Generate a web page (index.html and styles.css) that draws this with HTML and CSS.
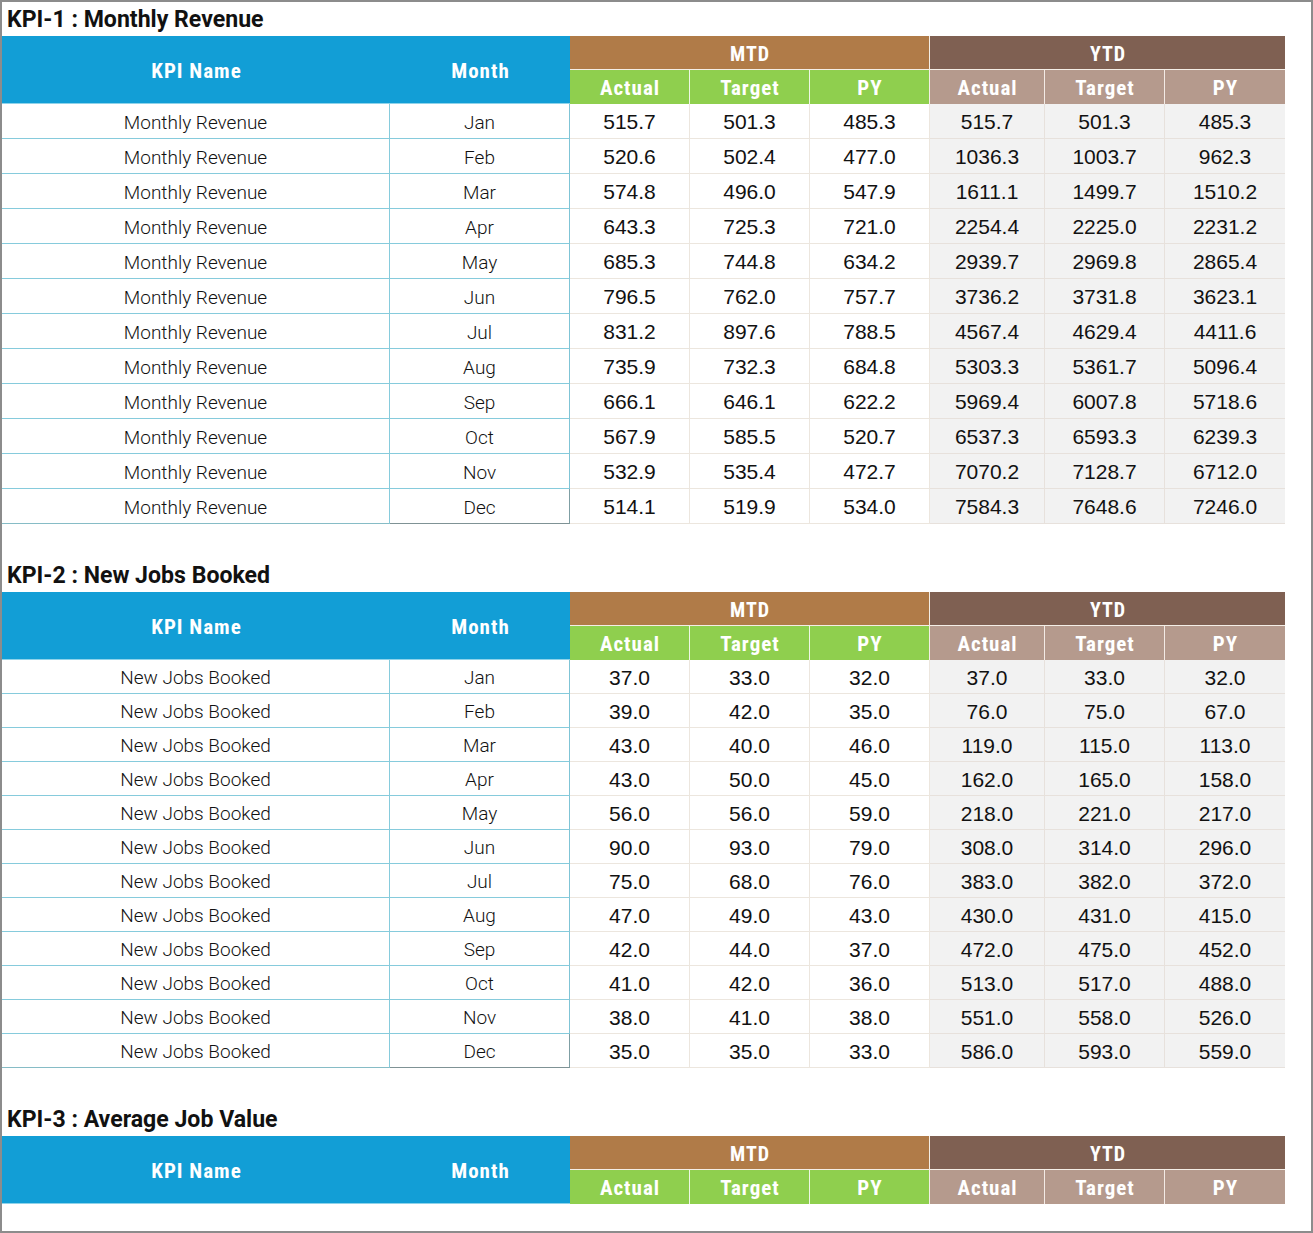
FILE: index.html
```html
<!DOCTYPE html>
<html lang="en">
<head>
<meta charset="utf-8">
<title>KPI Tables</title>
<link rel="stylesheet" href="styles.css">
</head>
<body>
<div class="sheet">

  <h2 class="kpi-title">KPI-1 : Monthly Revenue</h2>
  <table class="kpi rows35">
    <colgroup>
      <col class="c-name"><col class="c-month">
      <col class="c-num"><col class="c-num"><col class="c-num">
      <col class="c-num2"><col class="c-num"><col class="c-num">
    </colgroup>
    <thead>
      <tr class="hrow">
        <th class="h-blue" rowspan="2">KPI Name</th>
        <th class="h-blue" rowspan="2">Month</th>
        <th class="h-mtd" colspan="3">MTD</th>
        <th class="h-ytd" colspan="3">YTD</th>
      </tr>
      <tr class="hrow">
        <th class="h-green">Actual</th><th class="h-green">Target</th><th class="h-green last">PY</th>
        <th class="h-ysub">Actual</th><th class="h-ysub">Target</th><th class="h-ysub last">PY</th>
      </tr>
    </thead>
    <tbody>
      <tr><td class="nm">Monthly Revenue</td><td class="mo">Jan</td><td class="m">515.7</td><td class="m">501.3</td><td class="m">485.3</td><td class="y">515.7</td><td class="y">501.3</td><td class="y">485.3</td></tr>
      <tr><td class="nm">Monthly Revenue</td><td class="mo">Feb</td><td class="m">520.6</td><td class="m">502.4</td><td class="m">477.0</td><td class="y">1036.3</td><td class="y">1003.7</td><td class="y">962.3</td></tr>
      <tr><td class="nm">Monthly Revenue</td><td class="mo">Mar</td><td class="m">574.8</td><td class="m">496.0</td><td class="m">547.9</td><td class="y">1611.1</td><td class="y">1499.7</td><td class="y">1510.2</td></tr>
      <tr><td class="nm">Monthly Revenue</td><td class="mo">Apr</td><td class="m">643.3</td><td class="m">725.3</td><td class="m">721.0</td><td class="y">2254.4</td><td class="y">2225.0</td><td class="y">2231.2</td></tr>
      <tr><td class="nm">Monthly Revenue</td><td class="mo">May</td><td class="m">685.3</td><td class="m">744.8</td><td class="m">634.2</td><td class="y">2939.7</td><td class="y">2969.8</td><td class="y">2865.4</td></tr>
      <tr><td class="nm">Monthly Revenue</td><td class="mo">Jun</td><td class="m">796.5</td><td class="m">762.0</td><td class="m">757.7</td><td class="y">3736.2</td><td class="y">3731.8</td><td class="y">3623.1</td></tr>
      <tr><td class="nm">Monthly Revenue</td><td class="mo">Jul</td><td class="m">831.2</td><td class="m">897.6</td><td class="m">788.5</td><td class="y">4567.4</td><td class="y">4629.4</td><td class="y">4411.6</td></tr>
      <tr><td class="nm">Monthly Revenue</td><td class="mo">Aug</td><td class="m">735.9</td><td class="m">732.3</td><td class="m">684.8</td><td class="y">5303.3</td><td class="y">5361.7</td><td class="y">5096.4</td></tr>
      <tr><td class="nm">Monthly Revenue</td><td class="mo">Sep</td><td class="m">666.1</td><td class="m">646.1</td><td class="m">622.2</td><td class="y">5969.4</td><td class="y">6007.8</td><td class="y">5718.6</td></tr>
      <tr><td class="nm">Monthly Revenue</td><td class="mo">Oct</td><td class="m">567.9</td><td class="m">585.5</td><td class="m">520.7</td><td class="y">6537.3</td><td class="y">6593.3</td><td class="y">6239.3</td></tr>
      <tr><td class="nm">Monthly Revenue</td><td class="mo">Nov</td><td class="m">532.9</td><td class="m">535.4</td><td class="m">472.7</td><td class="y">7070.2</td><td class="y">7128.7</td><td class="y">6712.0</td></tr>
      <tr><td class="nm">Monthly Revenue</td><td class="mo">Dec</td><td class="m">514.1</td><td class="m">519.9</td><td class="m">534.0</td><td class="y">7584.3</td><td class="y">7648.6</td><td class="y">7246.0</td></tr>
    </tbody>
  </table>

  <h2 class="kpi-title spaced">KPI-2 : New Jobs Booked</h2>
  <table class="kpi rows34">
    <colgroup>
      <col class="c-name"><col class="c-month">
      <col class="c-num"><col class="c-num"><col class="c-num">
      <col class="c-num2"><col class="c-num"><col class="c-num">
    </colgroup>
    <thead>
      <tr class="hrow">
        <th class="h-blue" rowspan="2">KPI Name</th>
        <th class="h-blue" rowspan="2">Month</th>
        <th class="h-mtd" colspan="3">MTD</th>
        <th class="h-ytd" colspan="3">YTD</th>
      </tr>
      <tr class="hrow">
        <th class="h-green">Actual</th><th class="h-green">Target</th><th class="h-green last">PY</th>
        <th class="h-ysub">Actual</th><th class="h-ysub">Target</th><th class="h-ysub last">PY</th>
      </tr>
    </thead>
    <tbody>
      <tr><td class="nm">New Jobs Booked</td><td class="mo">Jan</td><td class="m">37.0</td><td class="m">33.0</td><td class="m">32.0</td><td class="y">37.0</td><td class="y">33.0</td><td class="y">32.0</td></tr>
      <tr><td class="nm">New Jobs Booked</td><td class="mo">Feb</td><td class="m">39.0</td><td class="m">42.0</td><td class="m">35.0</td><td class="y">76.0</td><td class="y">75.0</td><td class="y">67.0</td></tr>
      <tr><td class="nm">New Jobs Booked</td><td class="mo">Mar</td><td class="m">43.0</td><td class="m">40.0</td><td class="m">46.0</td><td class="y">119.0</td><td class="y">115.0</td><td class="y">113.0</td></tr>
      <tr><td class="nm">New Jobs Booked</td><td class="mo">Apr</td><td class="m">43.0</td><td class="m">50.0</td><td class="m">45.0</td><td class="y">162.0</td><td class="y">165.0</td><td class="y">158.0</td></tr>
      <tr><td class="nm">New Jobs Booked</td><td class="mo">May</td><td class="m">56.0</td><td class="m">56.0</td><td class="m">59.0</td><td class="y">218.0</td><td class="y">221.0</td><td class="y">217.0</td></tr>
      <tr><td class="nm">New Jobs Booked</td><td class="mo">Jun</td><td class="m">90.0</td><td class="m">93.0</td><td class="m">79.0</td><td class="y">308.0</td><td class="y">314.0</td><td class="y">296.0</td></tr>
      <tr><td class="nm">New Jobs Booked</td><td class="mo">Jul</td><td class="m">75.0</td><td class="m">68.0</td><td class="m">76.0</td><td class="y">383.0</td><td class="y">382.0</td><td class="y">372.0</td></tr>
      <tr><td class="nm">New Jobs Booked</td><td class="mo">Aug</td><td class="m">47.0</td><td class="m">49.0</td><td class="m">43.0</td><td class="y">430.0</td><td class="y">431.0</td><td class="y">415.0</td></tr>
      <tr><td class="nm">New Jobs Booked</td><td class="mo">Sep</td><td class="m">42.0</td><td class="m">44.0</td><td class="m">37.0</td><td class="y">472.0</td><td class="y">475.0</td><td class="y">452.0</td></tr>
      <tr><td class="nm">New Jobs Booked</td><td class="mo">Oct</td><td class="m">41.0</td><td class="m">42.0</td><td class="m">36.0</td><td class="y">513.0</td><td class="y">517.0</td><td class="y">488.0</td></tr>
      <tr><td class="nm">New Jobs Booked</td><td class="mo">Nov</td><td class="m">38.0</td><td class="m">41.0</td><td class="m">38.0</td><td class="y">551.0</td><td class="y">558.0</td><td class="y">526.0</td></tr>
      <tr><td class="nm">New Jobs Booked</td><td class="mo">Dec</td><td class="m">35.0</td><td class="m">35.0</td><td class="m">33.0</td><td class="y">586.0</td><td class="y">593.0</td><td class="y">559.0</td></tr>
    </tbody>
  </table>

  <h2 class="kpi-title spaced">KPI-3 : Average Job Value</h2>
  <table class="kpi rows34">
    <colgroup>
      <col class="c-name"><col class="c-month">
      <col class="c-num"><col class="c-num"><col class="c-num">
      <col class="c-num2"><col class="c-num"><col class="c-num">
    </colgroup>
    <thead>
      <tr class="hrow">
        <th class="h-blue" rowspan="2">KPI Name</th>
        <th class="h-blue" rowspan="2">Month</th>
        <th class="h-mtd" colspan="3">MTD</th>
        <th class="h-ytd" colspan="3">YTD</th>
      </tr>
      <tr class="hrow">
        <th class="h-green">Actual</th><th class="h-green">Target</th><th class="h-green last">PY</th>
        <th class="h-ysub">Actual</th><th class="h-ysub">Target</th><th class="h-ysub last">PY</th>
      </tr>
    </thead>
  </table>

</div>
</body>
</html>
```
FILE: styles.css
```css
html, body {
  margin: 0;
  padding: 0;
  background: #ffffff;
}

.sheet {
  box-sizing: border-box;
  width: 1313px;
  height: 1233px;
  border: 2px solid #8c8c8c;
  background: #ffffff;
  overflow: hidden;
}

.kpi-title {
  margin: 0;
  height: 34px;
  line-height: 36px;
  padding-left: 5px;
  font-family: "Roboto", "Liberation Sans", sans-serif;
  font-stretch: normal;
  font-weight: 700;
  font-size: 23.1px;
  color: #111111;
}

.kpi-title.spaced {
  margin-top: 34px;
}

.kpi {
  table-layout: fixed;
  width: 1283px;
  border-collapse: separate;
  border-spacing: 0;
}

.c-name { width: 388px; }
.c-month { width: 180px; }
.c-num { width: 120px; }
.c-num2 { width: 115px; }

.kpi th,
.kpi td {
  padding: 0;
  text-align: center;
  vertical-align: middle;
  box-sizing: border-box;
}

/* header */
.hrow { height: 34px; }

.kpi th {
  padding-top: 2px;
  font-family: "Roboto", "Liberation Sans", sans-serif;
  font-stretch: 75%;
  font-weight: 700;
  font-size: 21px;
  letter-spacing: 1px;
  text-indent: 1px;
  color: #ffffff;
}

.h-blue {
  background: #129ed6;
  color: #eaf8ff;
  border-bottom: 1px solid #8fd3ea;
}

.h-mtd {
  background: #b07b48;
  border-bottom: 1px solid #f4eee6;
  border-right: 1px solid #f4eee6;
  font-size: 20px !important;
}

.h-ytd {
  background: #7f6052;
  border-bottom: 1px solid #f4eee6;
  font-size: 20px !important;
}

.h-green {
  background: #8fcf4e;
  border-right: 1px solid #eef7e4;
}

.h-green.last {
  border-right: 1px solid #f4eee6;
}

.h-ysub {
  background: #b59a8d;
  border-right: 1px solid #f3ebe6;
}

.h-ysub.last {
  border-right: none;
}

/* body */
.rows35 tbody tr { height: 35px; }
.rows34 tbody tr { height: 34px; }

.kpi td {
  padding-top: 2px;
  color: #111111;
}

.nm,
.mo {
  font-family: "Roboto", "Liberation Sans", sans-serif;
  font-weight: 300;
  font-size: 19px;
  background: #ffffff;
  border-bottom: 1px solid #86cbdc;
  border-right: 1px solid #86cbdc;
}

.mo {
  border-right: 1px solid #7fc4d6;
}

.kpi tbody tr:last-child .nm {
  border-bottom-color: #86bcc6;
}

.kpi tbody tr:last-child .mo {
  border-bottom-color: #7f9295;
  border-right-color: #7f9fa4;
}

.m,
.y {
  font-family: "Liberation Sans", "Arial", sans-serif;
  font-size: 21px;
  border-bottom: 1px solid #ece6de;
  border-right: 1px solid #ece6de;
}

.m { background: #ffffff; }

.y {
  background: #f2f2f2;
  border-bottom: 1px solid #e7e1dc;
  border-right: 1px solid #e7e1dc;
}

.y:last-child { border-right: none; }
```
